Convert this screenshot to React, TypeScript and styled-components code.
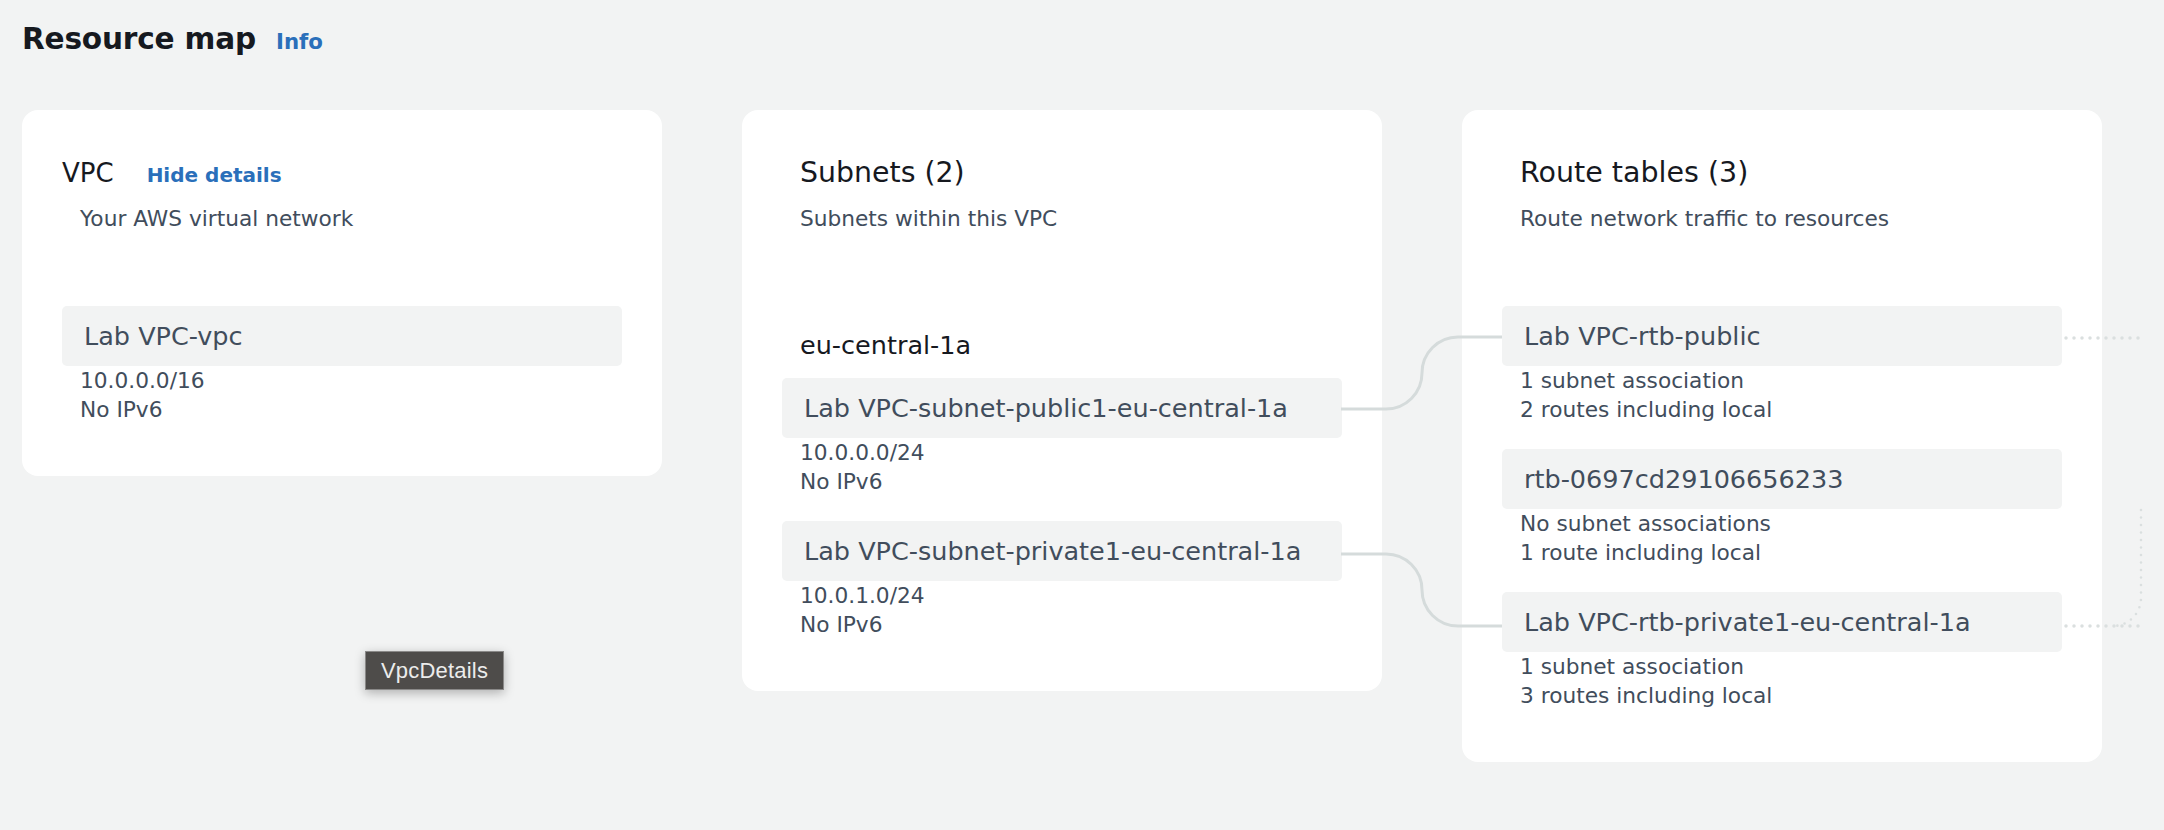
import React from "react";
import styled, { createGlobalStyle } from "styled-components";

const GlobalStyle = createGlobalStyle`
  html, body {
    margin: 0;
    padding: 0;
    background: #f2f3f3;
  }
  body {
    font-family: "DejaVu Sans", "Open Sans", sans-serif;
    width: 2164px;
    height: 830px;
    overflow: hidden;
  }
  * { box-sizing: border-box; }
`;

const Page = styled.div`
  position: relative;
  width: 2164px;
  height: 830px;
  padding: 22px 22px 0;
  background: #f2f3f3;
`;

const Header = styled.div`
  display: flex;
  align-items: baseline;
  gap: 20px;
  height: 35px;
`;

const PageTitle = styled.h1`
  margin: 0;
  font-size: 29.6px;
  line-height: 35px;
  font-weight: 700;
  color: #16191f;
  letter-spacing: -0.2px;
`;

const Link = styled.a<{ $size: number }>`
  font-size: ${(p) => p.$size}px;
  font-weight: 700;
  color: #2a6fba;
  text-decoration: none;
  cursor: pointer;
`;

const CardsRow = styled.div`
  display: flex;
  align-items: flex-start;
  gap: 80px;
  margin-top: 53px;
`;

const Card = styled.section`
  width: 640px;
  background: #ffffff;
  border-radius: 16px;
  padding: 47px 40px 52px;
  display: flex;
  flex-direction: column;
`;

const TitleRow = styled.div<{ $indent: boolean }>`
  display: flex;
  align-items: baseline;
  gap: 33px;
  padding-left: ${(p) => (p.$indent ? 18 : 0)}px;
  height: 32px;
`;

const CardTitle = styled.h2<{ $size: number }>`
  margin: 0;
  font-size: ${(p) => p.$size}px;
  line-height: 32px;
  font-weight: 400;
  color: #16191f;
`;

const Description = styled.p`
  margin: 15px 0 0;
  padding-left: 18px;
  font-size: 21.7px;
  line-height: 29px;
  color: #414d5c;
`;

const ResourceArea = styled.div`
  margin-top: 73px;
  display: flex;
  flex-direction: column;
`;

const ZoneLabel = styled.div`
  margin: 19px 0 13px;
  padding-left: 18px;
  font-size: 25.5px;
  line-height: 40px;
  color: #16191f;
`;

const GroupStack = styled.div`
  display: flex;
  flex-direction: column;
  gap: 25px;
`;

const Group = styled.div`
  display: flex;
  flex-direction: column;
`;

const ResourceBox = styled.div`
  height: 60px;
  display: flex;
  align-items: center;
  padding-left: 22px;
  background: #f2f3f3;
  border-radius: 5px;
  font-size: 25.5px;
  color: #414d5c;
  white-space: nowrap;
`;

const DetailLine = styled.div`
  padding-left: 18px;
  font-size: 21.7px;
  line-height: 29px;
  color: #414d5c;
  &:first-of-type {
    margin-top: 1px;
  }
`;

const Overlay = styled.svg`
  position: absolute;
  top: 0;
  left: 0;
  width: 2164px;
  height: 830px;
  pointer-events: none;
  overflow: visible;
`;

const Tooltip = styled.div`
  position: absolute;
  left: 365px;
  top: 651px;
  width: 139px;
  height: 39px;
  display: flex;
  align-items: center;
  justify-content: center;
  background: #4e4c4a;
  border: 1px solid #8a8988;
  box-shadow: 0 3px 10px rgba(0, 0, 0, 0.28);
  font-family: "Liberation Sans", Arial, sans-serif;
  font-size: 22px;
  color: #ececec;
  letter-spacing: 0.2px;
`;

type Resource = { name: string; details: string[] };

const subnets: Resource[] = [
  { name: "Lab VPC-subnet-public1-eu-central-1a", details: ["10.0.0.0/24", "No IPv6"] },
  { name: "Lab VPC-subnet-private1-eu-central-1a", details: ["10.0.1.0/24", "No IPv6"] },
];

const routeTables: Resource[] = [
  { name: "Lab VPC-rtb-public", details: ["1 subnet association", "2 routes including local"] },
  { name: "rtb-0697cd29106656233", details: ["No subnet associations", "1 route including local"] },
  { name: "Lab VPC-rtb-private1-eu-central-1a", details: ["1 subnet association", "3 routes including local"] },
];

function ResourceGroup({ item }: { item: Resource }) {
  return (
    <Group>
      <ResourceBox>{item.name}</ResourceBox>
      {item.details.map((d) => (
        <DetailLine key={d}>{d}</DetailLine>
      ))}
    </Group>
  );
}

export default function App() {
  return (
    <>
      <GlobalStyle />
      <Page>
        <Header>
          <PageTitle>Resource map</PageTitle>
          <Link $size={21.3}>Info</Link>
        </Header>
        <CardsRow>
          <Card>
            <TitleRow $indent={false}>
              <CardTitle $size={26}>VPC</CardTitle>
              <Link $size={20}>Hide details</Link>
            </TitleRow>
            <Description>Your AWS virtual network</Description>
            <ResourceArea>
              <ResourceGroup item={{ name: "Lab VPC-vpc", details: ["10.0.0.0/16", "No IPv6"] }} />
            </ResourceArea>
          </Card>
          <Card>
            <TitleRow $indent>
              <CardTitle $size={28.4}>Subnets (2)</CardTitle>
            </TitleRow>
            <Description>Subnets within this VPC</Description>
            <ResourceArea>
              <ZoneLabel>eu-central-1a</ZoneLabel>
              <GroupStack>
                {subnets.map((s) => (
                  <ResourceGroup key={s.name} item={s} />
                ))}
              </GroupStack>
            </ResourceArea>
          </Card>
          <Card>
            <TitleRow $indent>
              <CardTitle $size={28.5}>Route tables (3)</CardTitle>
            </TitleRow>
            <Description>Route network traffic to resources</Description>
            <ResourceArea>
              <GroupStack>
                {routeTables.map((r) => (
                  <ResourceGroup key={r.name} item={r} />
                ))}
              </GroupStack>
            </ResourceArea>
          </Card>
        </CardsRow>

        <Overlay viewBox="0 0 2164 830">
          <g fill="none" stroke="#d5dbdb" strokeWidth={3}>
            <path d="M1341 409 H1386 A36 36 0 0 0 1422 373 A36 36 0 0 1 1458 337 H1502" />
            <path d="M1341 554 H1386 A36 36 0 0 1 1422 590 A36 36 0 0 0 1458 626 H1502" />
          </g>
          <g fill="none" stroke="#dadfdf" strokeWidth={3.5} strokeLinecap="round" strokeDasharray="0 8">
            <path d="M2066 338 H2140" />
            <path d="M2066 626 H2140" />
          </g>
          <g fill="none" stroke="#dadfdf" strokeWidth={2.6} strokeLinecap="round" strokeDasharray="0 7.5">
            <path d="M2141 510 V598 A28 28 0 0 1 2113 626" />
          </g>
        </Overlay>

        <Tooltip>VpcDetails</Tooltip>
      </Page>
    </>
  );
}
